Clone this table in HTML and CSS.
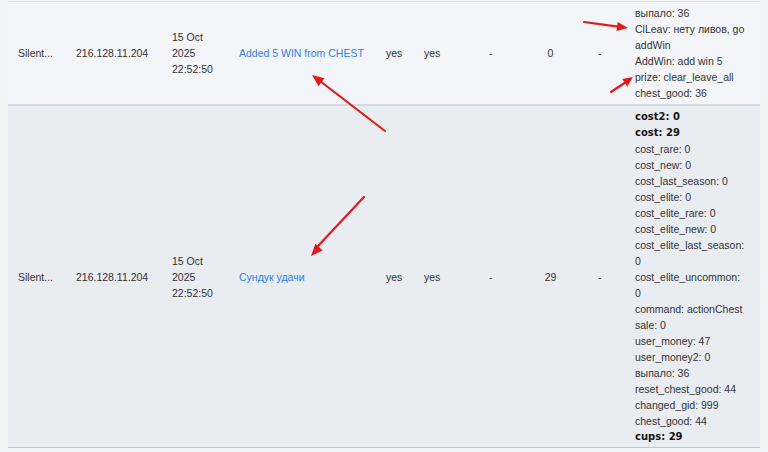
FILE: index.html
```html
<!DOCTYPE html>
<html lang="en">
<head>
    <meta charset="UTF-8">
    <title>Log</title>
    <link rel="stylesheet" href="styles.css">
</head>
<body>

<div class="page">
    <table class="log-table">
        <colgroup>
            <col class="c-user">
            <col class="c-ip">
            <col class="c-date">
            <col class="c-action">
            <col class="c-yes">
            <col class="c-yes2">
            <col class="c-dash">
            <col class="c-num">
            <col class="c-dash2">
            <col class="c-info">
        </colgroup>
        <tr class="row-light">
            <td>Silent...</td>
            <td>216.128.11.204</td>
            <td>15 Oct 2025 22:52:50</td>
            <td><a href="#">Added 5 WIN from CHEST</a></td>
            <td>yes</td>
            <td>yes</td>
            <td>-</td>
            <td class="num">0</td>
            <td>-</td>
            <td class="info">
                <div>выпало: 36</div>
                <div>ClLeav: нету ливов, go addWin</div>
                <div>AddWin: add win 5</div>
                <div>prize: clear_leave_all</div>
                <div>chest_good: 36</div>
            </td>
        </tr>
        <tr class="row-dark">
            <td>Silent...</td>
            <td>216.128.11.204</td>
            <td>15 Oct 2025 22:52:50</td>
            <td><a href="#">Сундук удачи</a></td>
            <td>yes</td>
            <td>yes</td>
            <td>-</td>
            <td class="num">29</td>
            <td>-</td>
            <td class="info">
                <div class="strong">cost2: 0</div>
                <div class="strong">cost: 29</div>
                <div>cost_rare: 0</div>
                <div>cost_new: 0</div>
                <div>cost_last_season: 0</div>
                <div>cost_elite: 0</div>
                <div>cost_elite_rare: 0</div>
                <div>cost_elite_new: 0</div>
                <div>cost_elite_last_season: 0</div>
                <div>cost_elite_uncommon: 0</div>
                <div>command: actionChest</div>
                <div>sale: 0</div>
                <div>user_money: 47</div>
                <div>user_money2: 0</div>
                <div>выпало: 36</div>
                <div>reset_chest_good: 44</div>
                <div>changed_gid: 999</div>
                <div>chest_good: 44</div>
                <div class="strong">cups: 29</div>
            </td>
        </tr>
    </table>

    <!-- red annotation arrows drawn over the table -->
    <svg class="arrows" width="768" height="452" viewBox="0 0 768 452">
        <g stroke="#e01b1b" stroke-width="2.2" stroke-linecap="round">
            <line x1="385" y1="131" x2="320" y2="81"/>
            <line x1="364" y1="197" x2="318" y2="246"/>
            <line x1="584" y1="22" x2="618" y2="26.6"/>
            <line x1="611" y1="92" x2="626" y2="82"/>
        </g>
        <g fill="#e01b1b">
            <polygon points="312,75 324.5,78.3 318.5,86.3"/>
            <polygon points="311,256 322.7,250.4 315.3,243.8"/>
            <polygon points="628,28 616.5,31 617.7,22"/>
            <polygon points="633,77 627.3,86.4 622.2,78.9"/>
        </g>
    </svg>
</div>

</body>
</html>
```

FILE: styles.css
```css
body {
    margin: 0;
    background-color: #f2f3f5;
    font-family: "Liberation Sans", Arial, sans-serif;
    font-size: 10.5px;
    line-height: 16px;
    color: #333;
}
.page {
    position: relative;
    padding: 1px 8px 0 8px;
    height: 451px;
    overflow: hidden;
}
.log-table {
    width: 752px;
    table-layout: fixed;
    border-collapse: collapse;
}
.c-user { width: 58px; }
.c-ip { width: 96px; }
.c-date { width: 67px; }
.c-action { width: 147px; }
.c-yes { width: 38px; }
.c-yes2 { width: 65px; }
.c-dash { width: 31px; }
.c-num { width: 78px; }
.c-dash2 { width: 37px; }
.c-info { width: 135px; }
.log-table td {
    padding: 3px 10px;
    vertical-align: middle;
    text-align: left;
}
.log-table td.num {
    text-align: center;
    padding-left: 13px;
}
.log-table td.info {
    padding-right: 13px;
}
.row-dark td {
    padding-bottom: 2px;
}
.row-light {
    background-color: #f4f5f8;
    border-top: 1px solid #d8dde5;
    border-bottom: 2px solid #d2d9e2;
}
.row-dark {
    background-color: #e9ecf1;
    border-bottom: 1px solid #bcc6d4;
}
.log-table a {
    color: #2e80e6;
    text-decoration: none;
}
.strong {
    font-family: "DejaVu Sans", Verdana, sans-serif;
    font-size: 10px;
    font-weight: bold;
    color: #151515;
}
.arrows {
    position: absolute;
    top: 0;
    left: 0;
    pointer-events: none;
}
```
